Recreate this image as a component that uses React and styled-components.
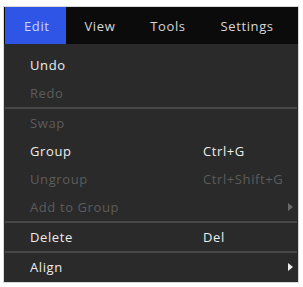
import styled, { createGlobalStyle } from "styled-components"

const GlobalStyle = createGlobalStyle`
    html, body{
        margin: 0;
        padding: 0;
        background: #FFFFFF;
    }
`

const tabs = ["Edit", "View", "Tools", "Settings"]

const items = [
    { label: "Undo" },
    { label: "Redo", disabled: true, sep: true },
    { label: "Swap", disabled: true },
    { label: "Group", shortcut: "Ctrl+G" },
    { label: "Ungroup", shortcut: "Ctrl+Shift+G", disabled: true },
    { label: "Add to Group", submenu: true, disabled: true, sep: true },
    { label: "Delete", shortcut: "Del", sep: true },
    { label: "Align", submenu: true },
]

function Arrow({ dim }){
    return (
        <svg width="5" height="8" viewBox="0 0 5 8">
            <path d="M0 0 L5 4 L0 8 Z" fill={dim ? "#6a6a6a" : "#EDEDED"} />
        </svg>
    )
}

export default function App(){
    return (
        <Page>
            <GlobalStyle />
            <Menu>
                <Bar>
                    {tabs.map((t, i) => (
                        <Tab key={t} active={i === 0}>{t}</Tab>
                    ))}
                </Bar>
                <List>
                    {items.map((item) => (
                        <div key={item.label}>
                            <Row disabled={item.disabled}>
                                <span>{item.label}</span>
                                <span className="shortcut">{item.shortcut}</span>
                                <span className="arrow">{item.submenu && <Arrow dim={item.disabled} />}</span>
                            </Row>
                            {item.sep && <Separator />}
                        </div>
                    ))}
                </List>
            </Menu>
        </Page>
    )
}

const Page = styled.div`
    width: 303px;
    height: 287px;
    box-sizing: border-box;
    padding: 7px 5px 5px 4px;
`
const Menu = styled.div`
    width: 294px;
    height: 275px;
    background: #2A2A2A;
    font-family: "Open Sans", "Liberation Sans", sans-serif;
    font-size: 13px;
    letter-spacing: 0.6px;
    box-shadow: 0 0 0 1px #d8d8d8;
    display: flex;
    flex-direction: column;
`
const Bar = styled.div`
    display: flex;
    height: 37px;
    background: #0B0B0B;
    padding-left: 1px;
`
const Tab = styled.div`
    display: flex;
    align-items: center;
    padding: 0 16px 0 19px;
    color: ${p => p.active ? "#C9D4FF" : "#D8D8D8"};
    background: ${p => p.active ? "#2F55E6" : "transparent"};
    font-weight: 500;
`
const List = styled.div`
    padding-top: 7px;
`
const Row = styled.div`
    display: grid;
    grid-template-columns: 173px 1fr 10px;
    align-items: center;
    height: 28px;
    padding-left: 26px;
    color: ${p => p.disabled ? "#5C5C5C" : "#EDEDED"};
    font-weight: 500;
    .arrow{
        display: flex;
        align-items: center;
    }
`
const Separator = styled.div`
    height: 2px;
    background: #474747;
    margin: 0 1px;
`
